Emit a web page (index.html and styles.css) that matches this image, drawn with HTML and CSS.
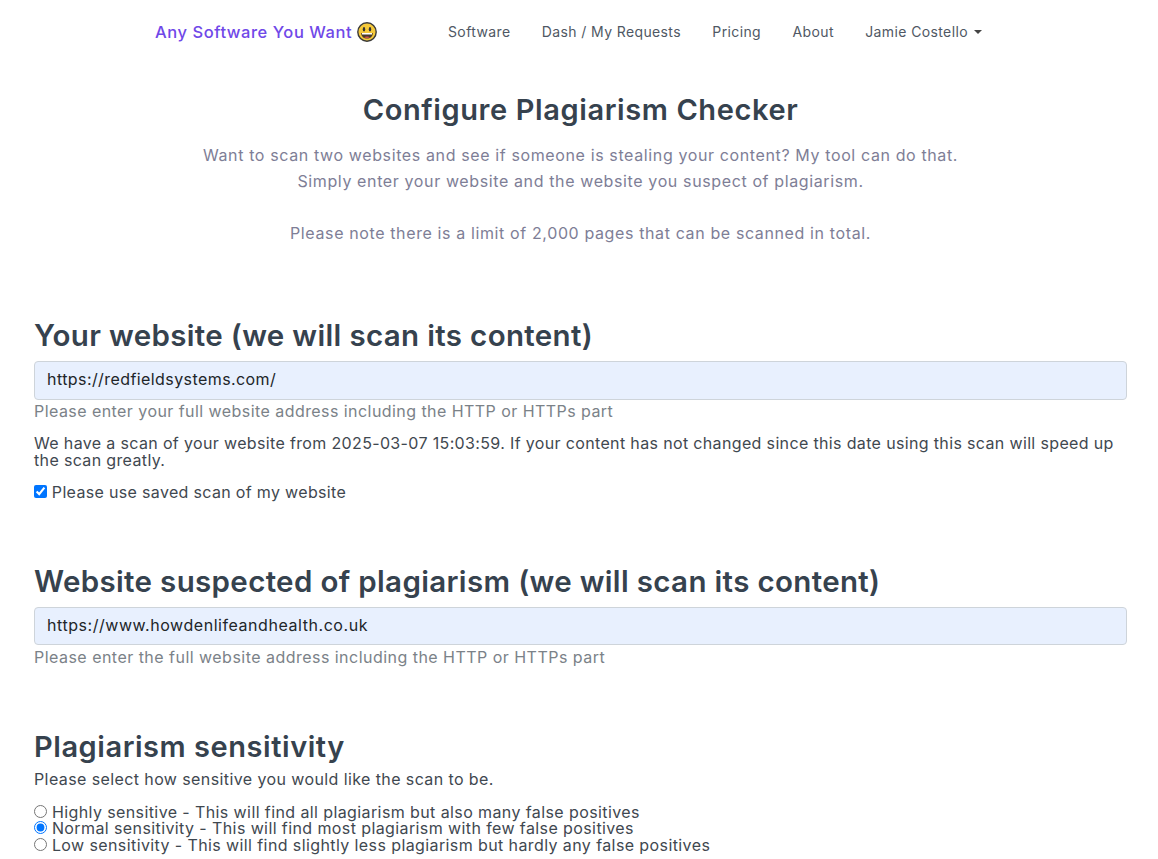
FILE: index.html
```html
<!DOCTYPE html>
<html lang="en">
<head>
<meta charset="utf-8">
<title>Configure Plagiarism Checker</title>
<link rel="stylesheet" href="styles.css">
</head>
<body>
<nav class="nav">
  <a class="brand" href="#">Any Software You Want
    <svg class="emoji" viewBox="0 0 20 20" width="20" height="20" aria-hidden="true">
      <circle cx="10" cy="10" r="9.2" fill="#f5c93a" stroke="#3a3a3a" stroke-width="1.4"/>
      <ellipse cx="7" cy="7.3" rx="1.2" ry="2.2" fill="#333"/>
      <ellipse cx="13" cy="7.3" rx="1.2" ry="2.2" fill="#333"/>
      <path d="M4.2 11h11.6c0 3.6-2.6 5.6-5.8 5.6S4.2 14.600 4.200 11z" fill="#4a3a2a"/>
      <path d="M5 11h10v1.500H5z" fill="#fff"/>
      <path d="M7 15.200c1.800-1.100 4.200-1.100 6 0-1.800 1.100-4.200 1.100-6 0z" fill="#d9534f"/>
    </svg>
  </a>
  <ul class="menu">
    <li><a href="#">Software</a></li>
    <li><a href="#">Dash / My Requests</a></li>
    <li><a href="#">Pricing</a></li>
    <li><a href="#">About</a></li>
    <li><a class="drop" href="#">Jamie Costello</a></li>
  </ul>
</nav>
<main class="page">
  <header class="intro">
    <h1>Configure Plagiarism Checker</h1>
    <p>Want to scan two websites and see if someone is stealing your content? My tool can do that.<br>Simply enter your website and the website you suspect of plagiarism.<br><br>Please note there is a limit of 2,000 pages that can be scanned in total.</p>
  </header>
  <section class="block first">
    <h2>Your website (we will scan its content)</h2>
    <input class="field" type="text" value="https://redfieldsystems.com/">
    <div class="help">Please enter your full website address including the HTTP or HTTPs part</div>
    <p class="note">We have a scan of your website from 2025-03-07 15:03:59. If your content has not changed since this date using this scan will speed up the scan greatly.</p>
    <label class="check"><input type="checkbox" checked> Please use saved scan of my website</label>
  </section>
  <section class="block second">
    <h2>Website suspected of plagiarism (we will scan its content)</h2>
    <input class="field" type="text" value="https://www.howdenlifeandhealth.co.uk">
    <div class="help">Please enter the full website address including the HTTP or HTTPs part</div>
  </section>
  <section class="block third">
    <h3>Plagiarism sensitivity</h3>
    <p class="lead">Please select how sensitive you would like the scan to be.</p>
    <label class="radio"><input type="radio" name="s"> Highly sensitive - This will find all plagiarism but also many false positives</label>
    <label class="radio"><input type="radio" name="s" checked> Normal sensitivity - This will find most plagiarism with few false positives</label>
    <label class="radio"><input type="radio" name="s"> Low sensitivity - This will find slightly less plagiarism but hardly any false positives</label>
  </section>
</main>
</body>
</html>
```
FILE: styles.css
```css
* { box-sizing: border-box; }
html, body { height: 859px; overflow: hidden; }
body {
  margin: 0;
  background: #fff;
  color: #3f4850;
  font-family: Inter, "Liberation Sans", sans-serif;
  font-size: 16px;
  letter-spacing: .4px;
}
a { text-decoration: none; color: inherit; }
.nav {
  display: flex;
  align-items: center;
  height: 64px;
  padding-left: 155px;
}
.brand {
  display: flex;
  align-items: center;
  gap: 5px;
  width: 293px;
  color: #7048e8;
  font-size: 16.500px;
  font-weight: 500;
  letter-spacing: .55px;
}
.emoji { flex: none; }
.menu {
  display: flex;
  gap: 31.400px;
  list-style: none;
  margin: 0;
  padding: 0;
  font-size: 14px;
  font-weight: 400;
  letter-spacing: .38px;
  color: #4f5864;
  position: relative;
  top: -1px;
}
.drop::after {
  content: "";
  display: inline-block;
  margin-left: 6px;
  vertical-align: 3px;
  border-top: 4px solid #444;
  border-left: 4px solid transparent;
  border-right: 4px solid transparent;
}
.page { padding: 0 31px 0 34px; }
.intro { text-align: center; }
.intro h1 {
  margin: 28px 0 0;
  font-size: 29px;
  line-height: 36px;
  font-weight: 600;
  letter-spacing: .6px;
  color: #36424e;
}
.intro p {
  margin: 14px 0 0;
  font-size: 16px;
  line-height: 26px;
  letter-spacing: .62px;
  color: #7e7e96;
}
.block h2 {
  margin: 0 0 8px;
  font-size: 29.500px;
  line-height: 36px;
  font-weight: 600;
  letter-spacing: .34px;
  color: #36424e;
}
.first { margin-top: 70.500px; }
.second { margin-top: 61px; }
.third { margin-top: 62px; }
.field {
  display: block;
  width: 100%;
  height: 39px;
  padding: 0 12px 2px;
  background: #e8f0fe;
  border: 1px solid #ced4da;
  border-radius: 4px;
  color: #212529;
  font: inherit;
  letter-spacing: .42px;
}
.second .field { height: 38px; letter-spacing: .55px; }
.help {
  margin-top: 1px;
  line-height: 20px;
  letter-spacing: .44px;
  color: #7b8288;
}
.second .help { margin-top: 2px; letter-spacing: .47px; }
.note {
  margin: 14px 0 0;
  line-height: 17px;
  letter-spacing: .35px;
}
.check { display: block; margin-top: 13px; line-height: 20px; letter-spacing: .33px; }
.check input, .radio input { margin: 0; vertical-align: 0; }
.third h3 {
  margin: 0;
  font-size: 29px;
  line-height: 36px;
  font-weight: 600;
  letter-spacing: .55px;
  color: #36424e;
}
.lead { margin: 4px 0 15px; line-height: 20px; }
.radio { display: block; line-height: 16.500px; }
```
